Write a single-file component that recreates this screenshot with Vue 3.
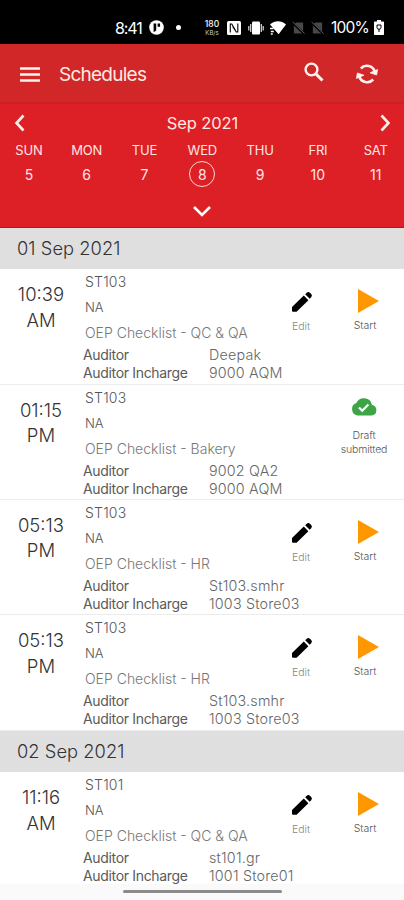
<template>
  <div class="screen">
    <div class="status-bar">
      <span class="status-bar__time">8:41</span>
      <svg class="status-bar__app" viewBox="0 0 16 16">
        <circle cx="8" cy="8" r="7.8" fill="#fff" />
        <path d="M4.900 3.800h2.800v7.400L4.900 13ZM9.200 3.800h2.600v3.400H9.200Z" fill="#000" />
      </svg>
      <span class="status-bar__dot"></span>
      <span class="status-bar__rate">
        <b>180</b>
        <small>KB/s</small>
      </span>
      <svg class="status-bar__nfc" viewBox="0 0 14 14">
        <rect width="14" height="14" rx="1.5" fill="#fff" />
        <path d="M3.300 11.500V3h1.500l3.700 6.500M10.800 2.500V11H9.300L5.600 5.500" fill="none" stroke="#000" stroke-width="1.100" />
      </svg>
      <svg class="status-bar__vibrate" viewBox="0 0 16 14">
        <rect x="4" y="0.5" width="8" height="13" rx="1.2" fill="#fff" />
        <path d="M2.7 3v8M.8 5v4.5M13.3 3v8M15.2 5v4.5" stroke="#ddd" stroke-width="1.2" />
      </svg>
      <svg class="status-bar__wifi" viewBox="0 0 16 14">
        <path d="M0 3.4C5-.7 11-.7 16 3.4L8.6 13.2Z" fill="#fff" />
        <path d="M0 7.500h3.500M.8 10.500h3M.8 13h2" stroke="#fff" stroke-width="1.400" />
      </svg>
      <svg v-for="n in 2" :key="n" class="status-bar__sim" viewBox="0 0 14 14">
        <path d="M4.5 1H12v12H2V3.5Z" fill="#484848" />
        <path d="M0 .8 13.5 13.6" stroke="#000" stroke-width="2.4" />
        <path d="M.6 .4 13.5 13" stroke="#666" stroke-width="1" />
      </svg>
      <span class="status-bar__percent">100%</span>
      <svg class="status-bar__battery" viewBox="0 0 10 15">
        <path d="M3 0h4v1.4h2c.6 0 1 .4 1 1V14c0 .6-.4 1-1 1H1c-.6 0-1-.4-1-1V2.400c0-.6.4-1 1-1h2Z" fill="#fff" />
        <path d="M3 5v2.300a2 2 0 0 0 4 0V5ZM5 9v3" fill="none" stroke="#000" stroke-width="1" />
      </svg>
    </div>

    <header class="app-bar">
      <svg class="app-bar__menu" viewBox="0 0 20 15">
        <path d="M0 1.500h20M0 7.500h20M0 13.500h20" stroke="#fff3ee" stroke-width="2.500" />
      </svg>
      <h1 class="app-bar__title">Schedules</h1>
      <svg class="app-bar__search" viewBox="0 0 20 20">
        <circle cx="7.500" cy="7.500" r="5.900" fill="none" stroke="#fff3ee" stroke-width="2.400" />
        <path d="m12 12 6.500 6.500" stroke="#fff3ee" stroke-width="3" />
      </svg>
      <svg class="app-bar__sync" viewBox="0 0 22 20">
        <path d="M4.800 4.500A8.300 8.300 0 0 1 18.800 7.500M17.200 15.500A8.300 8.300 0 0 1 3.200 12.500" fill="none" stroke="#fff3ee" stroke-width="2.600" />
        <path d="M14 8.800 21.600 5.600 20.600 11ZM8 11.200 .4 14.400 1.400 9Z" fill="#fff3ee" stroke="#fff3ee" stroke-width=".8" />
      </svg>
    </header>

    <section class="calendar">
      <div class="calendar__month">
        <svg class="calendar__arrow" viewBox="0 0 11 18"><path d="M9.500 1.500 2.500 9l7 7.500" /></svg>
        <span>Sep 2021</span>
        <svg class="calendar__arrow" viewBox="0 0 11 18"><path d="M1.500 1.500 8.500 9l-7 7.500" /></svg>
      </div>
      <div class="calendar__week">
        <div v-for="day in week" :key="day.name" class="calendar__day">
          <span class="calendar__name">{{ day.name }}</span>
          <span class="calendar__date" :class="{ 'calendar__date--active': day.date === selected }">{{ day.date }}</span>
        </div>
      </div>
      <svg class="calendar__expand" viewBox="0 0 20 12"><path d="m2 2 8 8 8-8" /></svg>
    </section>

    <main>
      <section v-for="group in groups" :key="group.date">
        <h2 class="group-title">{{ group.date }}</h2>
        <article v-for="(item, i) in group.items" :key="i" class="item">
          <div class="item__time">
            <span>{{ item.time }}</span>
            <span>{{ item.period }}</span>
          </div>
          <div class="item__body">
            <p class="item__store">{{ item.store }}</p>
            <p class="item__na">NA</p>
            <p class="item__checklist">{{ item.checklist }}</p>
            <dl class="item__people">
              <dt>Auditor</dt>
              <dd>{{ item.auditor }}</dd>
              <dt>Auditor Incharge</dt>
              <dd>{{ item.incharge }}</dd>
            </dl>
          </div>
          <div v-if="item.draft" class="item__actions item__actions--draft">
            <div class="action action--draft">
              <svg class="action__cloud" viewBox="0 0 26 18">
                <path d="M21 7A8.300 8.300 0 0 0 5.300 5 6.500 6.500 0 0 0 6.500 17.500H20.500A5.300 5.300 0 0 0 21 7Z" fill="#3da545" />
                <path d="m8 9.500 3.200 3.200 6.200-6.200" fill="none" stroke="#fff" stroke-width="2.200" />
              </svg>
              <span>Draft<br>submitted</span>
            </div>
          </div>
          <div v-else class="item__actions">
            <div class="action action--edit">
              <svg class="action__pencil" viewBox="0 0 22 22">
                <path d="M1 16 12.800 4.600l4.600 4.600L5.600 20.700H2Q1 20.700 1 19.700ZM14.200 3.300l1.500-1.500q1.600-1.400 3.200 0l1.300 1.300q1.500 1.600 0 3.200l-1.500 1.500Z" />
              </svg>
              <span>Edit</span>
            </div>
            <div class="action action--start">
              <svg class="action__play" viewBox="0 0 21 24"><path d="M0 0 21 12 0 24Z" fill="#ff9800" /></svg>
              <span>Start</span>
            </div>
          </div>
        </article>
      </section>
    </main>

    <div class="nav-bar"><span class="nav-bar__handle"></span></div>
  </div>
</template>

<script setup>
import { ref } from 'vue'

const selected = ref(8)

const week = ['SUN', 'MON', 'TUE', 'WED', 'THU', 'FRI', 'SAT'].map((name, i) => ({
  name,
  date: i + 5
}))

const groups = [
  {
    date: '01 Sep 2021',
    items: [
      { time: '10:39', period: 'AM', store: 'ST103', checklist: 'OEP Checklist - QC & QA', auditor: 'Deepak', incharge: '9000 AQM' },
      { time: '01:15', period: 'PM', store: 'ST103', checklist: 'OEP Checklist - Bakery', auditor: '9002 QA2', incharge: '9000 AQM', draft: true },
      { time: '05:13', period: 'PM', store: 'ST103', checklist: 'OEP Checklist - HR', auditor: 'St103.smhr', incharge: '1003 Store03' },
      { time: '05:13', period: 'PM', store: 'ST103', checklist: 'OEP Checklist - HR', auditor: 'St103.smhr', incharge: '1003 Store03' }
    ]
  },
  {
    date: '02 Sep 2021',
    items: [
      { time: '11:16', period: 'AM', store: 'ST101', checklist: 'OEP Checklist - QC & QA', auditor: 'st101.gr', incharge: '1001 Store01' }
    ]
  }
]
</script>

<style>
body {
  margin: 0;
}
</style>

<style scoped>
.screen {
  position: relative;
  width: 404px;
  height: 900px;
  overflow: hidden;
  background: #fff;
  font-family: Inter, "Liberation Sans", sans-serif;
  font-weight: 300;
}

h1,
h2,
p,
dl,
dd {
  margin: 0;
}

svg {
  display: block;
  flex: none;
}

.status-bar {
  display: flex;
  align-items: center;
  box-sizing: border-box;
  height: 44px;
  padding: 11px 19px 0 115px;
  background: #000;
  color: #fff;
  font-size: 16px;
  font-weight: 400;
  white-space: nowrap;
}

.status-bar__time {
  width: 34px;
  letter-spacing: -1.1px;
}

.status-bar__app {
  width: 15px;
  height: 15px;
}

.status-bar__dot {
  width: 5px;
  height: 5px;
  margin-left: 12px;
  border-radius: 50%;
  background: #fff;
}

.status-bar__rate {
  display: flex;
  flex-direction: column;
  align-items: center;
  width: 16px;
  margin-left: 23px;
}

.status-bar__rate b {
  font-size: 8.5px;
  font-weight: 500;
  line-height: 9px;
}

.status-bar__rate small {
  color: #ccc;
  font-size: 6px;
  line-height: 7px;
}

.status-bar__nfc {
  width: 14px;
  height: 14px;
  margin-left: 7px;
}

.status-bar__vibrate {
  width: 16px;
  height: 14px;
  margin-left: 7px;
}

.status-bar__wifi {
  width: 16px;
  height: 14px;
  margin-left: 6px;
}

.status-bar__sim {
  width: 13px;
  height: 14px;
  margin-left: 6px;
}

.status-bar__percent {
  margin-left: auto;
  font-size: 15.5px;
  letter-spacing: -0.75px;
}

.status-bar__battery {
  width: 10px;
  height: 15px;
  margin-left: 5px;
  margin-right: 1px;
}

.app-bar {
  display: flex;
  align-items: center;
  box-sizing: border-box;
  height: 60px;
  padding: 0 26px 0 20px;
  background: linear-gradient(#d12729 0 57px, #c91d22 60px);
}

.app-bar__menu {
  width: 20px;
  height: 15px;
}

.app-bar__title {
  margin-left: 19px;
  color: #ffe9e3;
  font-size: 19px;
  font-weight: 400;
  letter-spacing: -0.75px;
}

.app-bar__search {
  width: 20px;
  height: 20px;
  margin-top: -5px;
  margin-left: auto;
}

.app-bar__sync {
  width: 22px;
  height: 20px;
  margin-left: 32px;
}

.calendar {
  display: flex;
  flex-direction: column;
  box-sizing: border-box;
  height: 123.5px;
  padding-top: 9px;
  border-bottom: 1px solid #c80d12;
  background: #dd1f26;
  color: #ffe7e2;
}

.calendar__month {
  display: flex;
  align-items: center;
  justify-content: space-between;
  height: 20px;
  padding: 0 13px 0 14px;
  font-size: 16.5px;
  font-weight: 400;
  letter-spacing: -0.1px;
}

.calendar__arrow {
  width: 11px;
  height: 18px;
  fill: none;
  stroke: #ffefeb;
  stroke-width: 2.6;
}

.calendar__week {
  display: grid;
  grid-template-columns: repeat(7, 57.8px);
  height: 62px;
  padding-top: 7px;
  box-sizing: border-box;
}

.calendar__day {
  display: flex;
  flex-direction: column;
  align-items: center;
  font-weight: 400;
}

.calendar__name {
  height: 20px;
  font-size: 13px;
  line-height: 20px;
  letter-spacing: -0.2px;
}

.calendar__date {
  width: 24px;
  height: 24px;
  margin-top: 1px;
  border: 1.5px solid transparent;
  border-radius: 50%;
  font-size: 14px;
  line-height: 25px;
  text-align: center;
}

.calendar__date--active {
  border-color: #ffd6d0;
}

.calendar__expand {
  width: 20px;
  height: 12px;
  margin: 10px 0 0 192px;
  fill: none;
  stroke: #fff;
  stroke-width: 2.6;
}

.group-title {
  height: 41.7px;
  padding-left: 17px;
  background: #dfdfdf;
  color: #333;
  font-size: 18.3px;
  font-weight: 300;
  line-height: 41px;
  letter-spacing: 0.05px;
}

.item {
  display: grid;
  grid-template-columns: 82px 206px 1fr;
  box-sizing: border-box;
  height: 115.4px;
  border-bottom: 1.5px solid #ececec;
}

.item__time {
  display: flex;
  flex-direction: column;
  padding-top: 13px;
  color: #333;
  font-size: 18.5px;
  line-height: 25.5px;
  text-align: center;
}

.item__body {
  padding: 4px 0 0 1px;
  color: #555;
  font-size: 14px;
  line-height: 18px;
  white-space: nowrap;
}

.item__store,
.item__na,
.item__checklist {
  padding-left: 2px;
}

.item__store {
  letter-spacing: 0.2px;
}

.item__na {
  margin-top: 7px;
  font-size: 13px;
}

.item__checklist {
  margin-top: 8px;
  color: #777;
}

.item__people {
  display: grid;
  grid-template-columns: 126px 1fr;
  margin-top: 4px;
}

.item__people dt {
  color: #5a5a5a;
  font-weight: 400;
  letter-spacing: -0.33px;
}

.item__people dd {
  color: #666;
  font-size: 14.3px;
  letter-spacing: 0.2px;
}

.item__actions {
  display: flex;
  padding-top: 20px;
}

.item__actions--draft {
  padding-left: 48px;
  padding-top: 13px;
}

.action {
  display: flex;
  flex-direction: column;
  align-items: center;
  color: #555;
  font-size: 10.5px;
  line-height: 14px;
  text-align: center;
}

.action--edit {
  width: 26px;
  color: #888;
}

.action--start {
  width: 34px;
  margin-left: 34px;
}

.action--draft {
  width: 56px;
  letter-spacing: -0.15px;
}

.action__pencil {
  width: 22px;
  height: 22px;
  margin: 2px 0 7px 1px;
}

.action__play {
  width: 21px;
  height: 24px;
  margin: 0 0 6px 6px;
}

.action__cloud {
  width: 26px;
  height: 18px;
  margin-bottom: 13px;
}

.nav-bar {
  position: absolute;
  right: 0;
  bottom: 0;
  left: 0;
  display: flex;
  justify-content: center;
  height: 16px;
  background: #fafafa;
}

.nav-bar__handle {
  width: 159px;
  height: 3px;
  margin-top: 6px;
  border-radius: 2px;
  background: #8b8b8b;
}
</style>
